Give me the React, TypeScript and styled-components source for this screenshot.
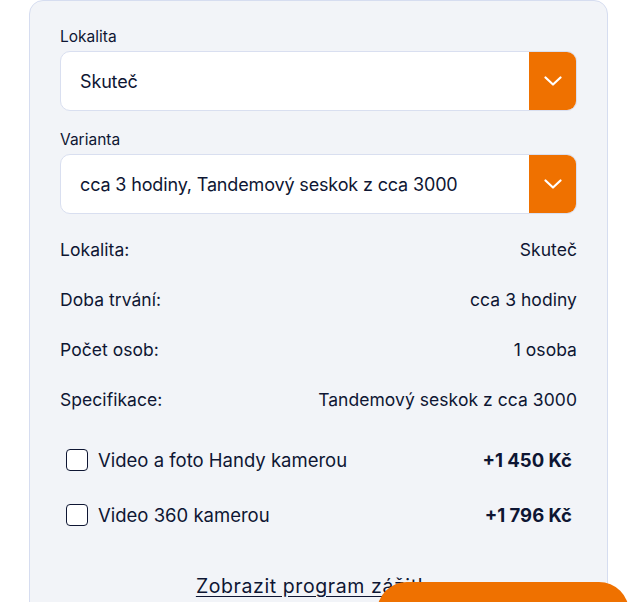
import React, { useState } from "react";
import styled, { createGlobalStyle } from "styled-components";

const Global = createGlobalStyle`
  html, body { margin: 0; padding: 0; background: #ffffff; }
  body { font-family: Inter, "Noto Sans", sans-serif; color: #0e1633; overflow: hidden; }
  * { box-sizing: border-box; }
`;

const Page = styled.div`
  position: relative;
  width: 643px;
  height: 602px;
  overflow: hidden;
`;

const Panel = styled.section`
  margin-left: 29px;
  width: 579px;
  background: #f2f4f8;
  border: 1px solid #d6ddf0;
  border-radius: 14px 14px 0 0;
  padding: 24px 30px 60px 30px;
  display: flex;
  flex-direction: column;
`;

const Field = styled.div`
  display: flex;
  flex-direction: column;
  gap: 3px;
  margin-bottom: 17px;
`;

const Label = styled.label`
  font-size: 15.5px;
  line-height: 23px;
  color: #0e1633;
`;

const SelectBox = styled.div`
  display: flex;
  height: 60px;
  background: #ffffff;
  border: 1px solid #d9dff0;
  border-radius: 10px;
  overflow: hidden;
`;

const SelectValue = styled.div`
  flex: 1;
  display: flex;
  align-items: center;
  padding-left: 19px;
  font-size: 18px;
  letter-spacing: -0.15px;
  color: #0e1633;
`;

const Arrow = styled.div`
  width: 48px;
  background: #ef7100;
  display: flex;
  align-items: center;
  justify-content: center;
  margin: -1px -1px -1px 0;
`;

const Info = styled.div`
  display: flex;
  flex-direction: column;
  margin-top: -7px;
`;

const InfoRow = styled.div`
  display: flex;
  justify-content: space-between;
  align-items: center;
  height: 50px;
  font-size: 17.5px;
  letter-spacing: 0.05px;
`;

const Options = styled.div`
  display: flex;
  flex-direction: column;
  margin-top: 8px;
  padding: 0 5px 0 6px;
`;

const OptionRow = styled.label`
  display: flex;
  align-items: center;
  height: 55px;
  font-size: 18.5px;
  cursor: pointer;
`;

const Box = styled.span<{ $checked: boolean }>`
  width: 22px;
  height: 22px;
  border: 1.5px solid #0e1633;
  border-radius: 4px;
  background: ${(p) => (p.$checked ? "#0e1633" : "#ffffff")};
  margin-right: 10px;
  flex-shrink: 0;
`;

const OptionName = styled.span`
  flex: 1;
`;

const Price = styled.span`
  font-weight: 700;
  font-size: 18.5px;
`;

const LinkRow = styled.div`
  display: flex;
  justify-content: center;
  margin-top: 32px;
`;

const ProgramLink = styled.a`
  font-size: 19.5px;
  letter-spacing: 0.6px;
  color: #0e1633;
  text-decoration: underline;
  text-underline-offset: 3px;
`;

const Cta = styled.button`
  position: absolute;
  left: 377px;
  top: 582px;
  width: 252px;
  height: 70px;
  border: none;
  border-radius: 30px;
  background: #ef7100;
`;

const Chevron = () => (
  <svg width="18" height="10" viewBox="0 0 18 10" fill="none">
    <path d="M1.5 1.5L9 8.5L16.5 1.5" stroke="#ffffff" strokeWidth="2.2" strokeLinecap="round" strokeLinejoin="round" />
  </svg>
);

const rows = [
  ["Lokalita:", "Skuteč"],
  ["Doba trvání:", "cca 3 hodiny"],
  ["Počet osob:", "1 osoba"],
  ["Specifikace:", "Tandemový seskok z cca 3000"],
];

const extras = [
  ["Video a foto Handy kamerou", "+1 450 Kč"],
  ["Video 360 kamerou", "+1 796 Kč"],
];

export default function App() {
  const [checked, setChecked] = useState<boolean[]>([false, false]);
  return (
    <Page>
      <Global />
      <Panel>
        <Field>
          <Label>Lokalita</Label>
          <SelectBox>
            <SelectValue>Skuteč</SelectValue>
            <Arrow><Chevron /></Arrow>
          </SelectBox>
        </Field>
        <Field>
          <Label>Varianta</Label>
          <SelectBox>
            <SelectValue>cca 3 hodiny, Tandemový seskok z cca 3000</SelectValue>
            <Arrow><Chevron /></Arrow>
          </SelectBox>
        </Field>
        <Info>
          {rows.map(([k, v]) => (
            <InfoRow key={k}>
              <span>{k}</span>
              <span>{v}</span>
            </InfoRow>
          ))}
        </Info>
        <Options>
          {extras.map(([name, price], i) => (
            <OptionRow
              key={name}
              onClick={() => setChecked((c) => c.map((x, j) => (j === i ? !x : x)))}
            >
              <Box $checked={checked[i]} />
              <OptionName>{name}</OptionName>
              <Price>{price}</Price>
            </OptionRow>
          ))}
        </Options>
        <LinkRow>
          <ProgramLink href="#">Zobrazit program zážitku</ProgramLink>
        </LinkRow>
      </Panel>
      <Cta aria-label="Koupit" />
    </Page>
  );
}
